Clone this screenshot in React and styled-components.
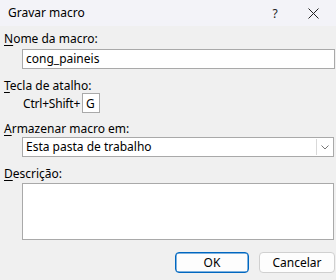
import React from 'react';
import styled, { createGlobalStyle } from 'styled-components';

const Global = createGlobalStyle`
  html, body {
    margin: 0;
    padding: 0;
    background: #f0f0f0;
  }
  body {
    font-family: "Noto Sans", "DejaVu Sans", sans-serif;
    font-size: 12px;
    color: #000;
  }
`;

const Dialog = styled.div`
  width: 336px;
  height: 280px;
  background: #f0f0f0;
  overflow: hidden;
  display: flex;
  flex-direction: column;
`;

const TitleBar = styled.div`
  height: 26px;
  background: #f3f3f8;
  display: flex;
  align-items: center;
  padding-left: 8px;
  flex-shrink: 0;
`;

const Title = styled.div`
  flex: 1;
  line-height: 16px;
`;

const TitleButton = styled.div`
  width: ${props => props.width}px;
  height: 26px;
  display: flex;
  align-items: center;
  justify-content: center;
  color: #222;
`;

const Body = styled.div`
  display: flex;
  flex-direction: column;
  padding: 5px 1px 0 4px;
`;

const Label = styled.div`
  line-height: 16px;
  margin-top: ${props => props.top || 0}px;
  margin-bottom: ${props => props.bottom || 0}px;

  u {
    text-decoration: underline;
    text-underline-offset: 2px;
  }
`;

const Field = styled.div`
  margin-left: 18px;
  height: 20px;
  box-sizing: border-box;
  border: 1px solid #a9a9a9;
  background: #fff;
  display: flex;
  align-items: center;
  padding-left: 3px;
  line-height: 16px;
`;

const ShortcutRow = styled.div`
  display: flex;
  align-items: center;
  margin-left: 19px;
  gap: 2px;
`;

const ShortcutText = styled.span`
  letter-spacing: -0.2px;
`;

const KeyBox = styled.div`
  width: 18px;
  height: 20px;
  box-sizing: border-box;
  border: 1px solid #a9a9a9;
  background: #fff;
  display: flex;
  align-items: center;
  padding-left: 3px;
`;

const Select = styled(Field)`
  margin-right: 1px;
  padding-right: 1px;
`;

const SelectText = styled.div`
  flex: 1;
`;

const DropButton = styled.div`
  width: 16px;
  height: 16px;
  box-sizing: border-box;
  border-left: 1px solid #d9d9d9;
  background: #fff;
  display: flex;
  align-items: center;
  justify-content: center;
`;

const TextArea = styled.div`
  margin-left: 18px;
  margin-right: 1px;
  height: 57px;
  box-sizing: border-box;
  border: 1px solid #a9a9a9;
  background: #fff;
`;

const Buttons = styled.div`
  display: flex;
  justify-content: flex-end;
  gap: 10px;
  margin-top: 12px;
`;

const Button = styled.div`
  width: ${props => props.width}px;
  height: 21px;
  box-sizing: border-box;
  border-radius: 4px;
  border: 1px solid ${props => (props.primary ? '#0067c0' : '#d0d0d0')};
  box-shadow: ${props => (props.primary ? 'inset 0 0 0 0.5px #0067c0' : 'none')};
  background: #fdfdfd;
  display: flex;
  align-items: center;
  justify-content: center;
  line-height: 16px;
`;

export default function App() {
  return (
    <Dialog>
      <Global />
      <TitleBar>
        <Title>Gravar macro</Title>
        <TitleButton width={30}>?</TitleButton>
        <TitleButton width={46}>
          <svg width="11" height="11" viewBox="0 0 11 11">
            <path d="M0.5 0.5 L10.5 10.5 M10.5 0.5 L0.5 10.5" stroke="#222" strokeWidth="1" fill="none" />
          </svg>
        </TitleButton>
      </TitleBar>
      <Body>
        <Label bottom={2}><u>N</u>ome da macro:</Label>
        <Field>cong_paineis</Field>
        <Label top={9} bottom={-1}><u>T</u>ecla de atalho:</Label>
        <ShortcutRow>
          <ShortcutText>Ctrl+Shift+</ShortcutText>
          <KeyBox>G</KeyBox>
        </ShortcutRow>
        <Label top={8}><u>A</u>rmazenar macro em:</Label>
        <Select>
          <SelectText>Esta pasta de trabalho</SelectText>
          <DropButton>
            <svg width="8" height="5" viewBox="0 0 8 5">
              <path d="M0.5 0.5 L4 4 L7.5 0.5" stroke="#777" strokeWidth="1" fill="none" />
            </svg>
          </DropButton>
        </Select>
        <Label top={9} bottom={1}><u>D</u>escrição:</Label>
        <TextArea />
        <Buttons>
          <Button primary width={74}>OK</Button>
          <Button width={76}>Cancelar</Button>
        </Buttons>
      </Body>
    </Dialog>
  );
}
